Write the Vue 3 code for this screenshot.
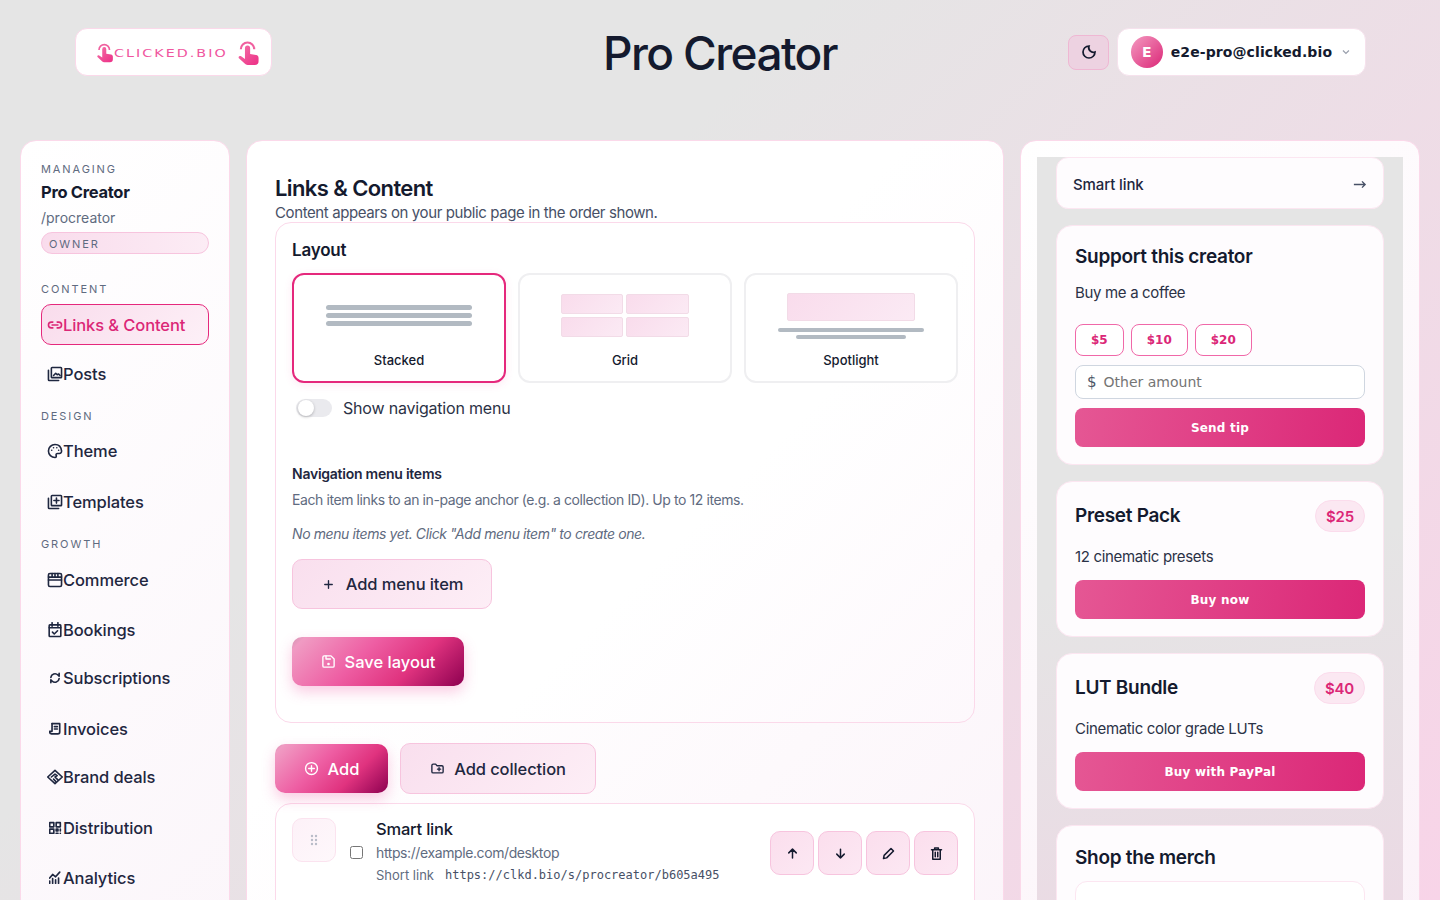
<template>
  <div class="page">
    <header class="topbar">
      <div class="logo-card">
        <svg class="hand small" viewBox="0 0 24 28"><use href="#hand-shape" /></svg>
        <span class="logo-box"><span class="logo-text">clicked.bio</span></span>
        <svg class="hand big" viewBox="0 0 24 28"><use href="#hand-shape" /></svg>
      </div>
      <h1 class="site-title">Pro Creator</h1>
      <div class="top-actions">
        <button class="moon-btn">
          <svg viewBox="0 0 24 24" class="icon"><path d="M12 3a7 7 0 0 0 9 9 9 9 0 1 1-9-9z" /></svg>
        </button>
        <div class="user-chip">
          <span class="avatar">E</span>
          <span class="user-mail">e2e-pro@clicked.bio</span>
          <svg viewBox="0 0 24 24" class="chev"><path d="M6 9l6 6 6-6" /></svg>
        </div>
      </div>
    </header>

    <svg width="0" height="0" class="defs">
      <defs>
        <linearGradient id="hand-fill" x1="0" y1="0" x2="1" y2="1">
          <stop offset="0" stop-color="#f472a8" />
          <stop offset="1" stop-color="#ec2f86" />
        </linearGradient>
        <g id="hand-shape">
          <path d="M4 10.500a7 7 0 1 1 14 0" fill="none" stroke="#f0609f" stroke-width="2.200" />
          <path d="M8.300 9.500a2.700 2.700 0 0 1 5.400 0v6l6.300 1.200c1.500.3 2.500 1.500 2.500 3V23a4 4 0 0 1-4 4h-7.500a4 4 0 0 1-3-1.400L2 20c-1.100-1.400.8-3.100 2.300-2l4 2.700z" fill="url(#hand-fill)" />
        </g>
      </defs>
    </svg>

    <div class="columns">
      <aside class="sidebar">
        <div class="side-label first">Managing</div>
        <div class="profile-name">Pro Creator</div>
        <div class="profile-slug">/procreator</div>
        <div class="owner-pill">OWNER</div>

        <template v-for="group in navGroups" :key="group.label">
          <div class="side-label" :class="'label-' + group.label.toLowerCase()">{{ group.label }}</div>
          <a
            v-for="item in group.items"
            :key="item.name"
            class="nav-item"
            :class="{ active: item.active }"
            :style="{ marginBottom: item.gap + 'px' }"
          >
            <svg viewBox="1 1 22 22" class="nav-icon" :class="{ small: item.small }"><path v-for="d in item.paths" :key="d" :d="d" /></svg>
            <span>{{ item.name }}</span>
          </a>
        </template>
      </aside>

      <main class="main-card">
        <h2 class="main-title">Links &amp; Content</h2>
        <p class="main-sub">Content appears on your public page in the order shown.</p>

        <section class="layout-card">
          <h3 class="layout-title">Layout</h3>
          <div class="tiles">
            <div class="tile selected">
              <div class="tile-art">
                <div class="bars stacked"><i></i><i></i><i></i></div>
              </div>
              <span>Stacked</span>
            </div>
            <div class="tile">
              <div class="tile-art">
                <div class="grid-art"><i></i><i></i><i></i><i></i></div>
              </div>
              <span>Grid</span>
            </div>
            <div class="tile">
              <div class="tile-art spot">
                <div class="spot-box"></div>
                <div class="spot-line"></div>
                <div class="spot-line short"></div>
              </div>
              <span>Spotlight</span>
            </div>
          </div>

          <div class="toggle-row">
            <span class="toggle"><span class="knob"></span></span>
            <span class="toggle-label">Show navigation menu</span>
          </div>

          <div class="menu-head">Navigation menu items</div>
          <p class="menu-desc">Each item links to an in-page anchor (e.g. a collection ID). Up to 12 items.</p>
          <p class="menu-empty">No menu items yet. Click "Add menu item" to create one.</p>

          <button class="soft-btn menu-btn">
            <svg viewBox="0 0 24 24" class="btn-icon"><path d="M12 6v12M6 12h12" /></svg>
            Add menu item
          </button>

          <button class="grad-btn save-btn">
            <svg viewBox="0 0 24 24" class="btn-icon"><path d="M5 3h11l5 5v11a2 2 0 0 1-2 2H5a2 2 0 0 1-2-2V5a2 2 0 0 1 2-2z" /><path d="M8 3v5h7M12 17a1 1 0 1 0 0-2 1 1 0 0 0 0 2z" /></svg>
            Save layout
          </button>
        </section>

        <div class="add-row">
          <button class="grad-btn add-btn">
            <svg viewBox="0 0 24 24" class="btn-icon round"><circle cx="12" cy="12" r="9.500" /><path d="M12 7.500v9M7.500 12h9" /></svg>
            Add
          </button>
          <button class="soft-btn coll-btn">
            <svg viewBox="0 0 24 24" class="btn-icon"><path d="M3 7a2 2 0 0 1 2-2h4l2 2.500h8a2 2 0 0 1 2 2V17a2 2 0 0 1-2 2H5a2 2 0 0 1-2-2z" /><path d="M12 13h5M14.500 10.500v5" /></svg>
            Add collection
          </button>
        </div>

        <div class="link-row">
          <div class="drag-handle">
            <svg viewBox="0 0 12 14" class="drag-dots">
              <circle v-for="d in dots" :key="d.x + '-' + d.y" :cx="d.x" :cy="d.y" r="1.200" />
            </svg>
          </div>
          <input type="checkbox" class="row-check" />
          <div class="row-text">
            <div class="row-title">Smart link</div>
            <div class="row-url">https://example.com/desktop</div>
            <div class="row-short">
              <span>Short link</span>
              <code>https://clkd.bio/s/procreator/b605a495</code>
            </div>
          </div>
          <div class="row-actions">
            <button class="icon-btn"><svg viewBox="0 0 24 24" class="act-icon"><path d="M12 19V5M6 11l6-6 6 6" /></svg></button>
            <button class="icon-btn"><svg viewBox="0 0 24 24" class="act-icon"><path d="M12 5v14M6 13l6 6 6-6" /></svg></button>
            <button class="icon-btn"><svg viewBox="0 0 24 24" class="act-icon"><path d="M4 20l1-5L16 4l4 4L9 19z" /></svg></button>
            <button class="icon-btn"><svg viewBox="0 0 24 24" class="act-icon"><path d="M4 6h16M9 6V3h6v3M6 6v15h12V6M10 10v7M14 10v7" /></svg></button>
          </div>
        </div>
      </main>

      <aside class="preview-card">
        <div class="preview-inner">
          <div class="pv-link">
            <span>Smart link</span>
            <svg viewBox="0 0 24 24" class="pv-arrow"><path d="M3 12h18M16 7l5 5-5 5" /></svg>
          </div>

          <div class="pv-card tip-card">
            <div class="pv-title">Support this creator</div>
            <div class="pv-desc tip-desc">Buy me a coffee</div>
            <div class="tip-pills">
              <button v-for="t in tips" :key="t" class="tip-pill">{{ t }}</button>
            </div>
            <div class="amount-input"><span class="dollar">$</span><span>Other amount</span></div>
            <button class="pv-btn tip-send">Send tip</button>
          </div>

          <div v-for="p in products" :key="p.title" class="pv-card product">
            <div class="product-head">
              <span class="pv-title">{{ p.title }}</span>
              <span class="price">{{ p.price }}</span>
            </div>
            <div class="pv-desc product-desc">{{ p.desc }}</div>
            <button class="pv-btn">{{ p.cta }}</button>
          </div>

          <div class="pv-card merch">
            <div class="pv-title">Shop the merch</div>
            <div class="merch-item"></div>
          </div>
        </div>
      </aside>
    </div>
  </div>
</template>

<script setup>
const icons = {
  link: ['M9 8H7a4 4 0 0 0 0 8h2M15 8h2a4 4 0 0 1 0 8h-2M8 12h8'],
  posts: ['M8 3h12a1 1 0 0 1 1 1v12a1 1 0 0 1-1 1H8a1 1 0 0 1-1-1V4a1 1 0 0 1 1-1z', 'M3 7v13a1 1 0 0 0 1 1h13', 'M10 14l3-3 2 2 2-1 2 2'],
  theme: ['M12 3a9 9 0 1 0 0 18c2 0 2-1.500 1.500-3-.4-1.500.5-2.500 2-2.500H18a3 3 0 0 0 3-3.500C20.500 6.500 17 3 12 3z', 'M7.500 11h.01M10 7.500h.01M14.500 7.500h.01M17 11h.01'],
  templates: ['M8 3h12a1 1 0 0 1 1 1v12a1 1 0 0 1-1 1H8a1 1 0 0 1-1-1V4a1 1 0 0 1 1-1z', 'M3 7v13a1 1 0 0 0 1 1h13', 'M14 6.500v7M10.500 10h7'],
  commerce: ['M5 3h14a2 2 0 0 1 2 2v3H3V5a2 2 0 0 1 2-2z', 'M3 8v11a2 2 0 0 0 2 2h14a2 2 0 0 0 2-2V8', 'M8 3v5M12 3v5M16 3v5', 'M3 12h18'],
  bookings: ['M5 5h14a1 1 0 0 1 1 1v14a1 1 0 0 1-1 1H5a1 1 0 0 1-1-1V6a1 1 0 0 1 1-1z', 'M8 2v5M16 2v5M4 9h16', 'M8.500 15l2.500 2.500 4.500-4.500'],
  subs: ['M5 11a7 7 0 0 1 12-4l2 2V4', 'M19 13a7 7 0 0 1-12 4l-2-2v5'],
  invoices: ['M7 3h13v14a3 3 0 0 1-3 3H6', 'M7 3v13H3v1a3 3 0 0 0 3 3h11', 'M11 8h5M11 12h5'],
  deals: ['M12 3l10 9-10 9L2 12z', 'M7 12l5-4 3 2-3 2 4 4', 'M10 15l3 3'],
  dist: ['M3 3h7v7H3zM14 3h7v7h-7zM3 14h7v7H3z', 'M14 14h3v3h-3zM21 14v3M14 21h3M21 21h.01'],
  analytics: ['M3 21v-4M8 21v-8M13 21v-6M18 21v-9', 'M3 12l5-6 5 4 7-8'],
}

const navGroups = [
  {
    label: 'Content',
    items: [
      { name: 'Links & Content', paths: icons.link, active: true, gap: 8 },
      { name: 'Posts', paths: icons.posts, gap: 0 },
    ],
  },
  {
    label: 'Design',
    items: [
      { name: 'Theme', paths: icons.theme, gap: 10 },
      { name: 'Templates', paths: icons.templates, gap: 0 },
    ],
  },
  {
    label: 'Growth',
    items: [
      { name: 'Commerce', paths: icons.commerce, gap: 9 },
      { name: 'Bookings', paths: icons.bookings, gap: 7 },
      { name: 'Subscriptions', paths: icons.subs, gap: 10, small: true },
      { name: 'Invoices', paths: icons.invoices, gap: 7, small: true },
      { name: 'Brand deals', paths: icons.deals, gap: 10 },
      { name: 'Distribution', paths: icons.dist, gap: 9, small: true },
      { name: 'Analytics', paths: icons.analytics, gap: 0, small: true },
    ],
  },
]

const tips = ['$5', '$10', '$20']

const products = [
  { title: 'Preset Pack', price: '$25', desc: '12 cinematic presets', cta: 'Buy now' },
  { title: 'LUT Bundle', price: '$40', desc: 'Cinematic color grade LUTs', cta: 'Buy with PayPal' },
]

const dots = []
for (const y of [3, 7, 11]) {
  for (const x of [4, 8]) dots.push({ x, y })
}
</script>

<style>
html, body {
  margin: 0;
  height: 900px;
  overflow: hidden;
}
</style>

<style scoped>
.page {
  width: 1440px;
  height: 900px;
  overflow: hidden;
  background: linear-gradient(135deg, #e5e5e5 0%, #e5e5e5 35%, #f8d4e8 100%);
  font-family: Inter, "Noto Sans", sans-serif;
  color: #1a2033;
}
.defs { position: absolute; }

.topbar {
  display: grid;
  grid-template-columns: 1fr auto 1fr;
  align-items: center;
  padding: 28px 74px 0;
  height: 48px;
  margin-bottom: 64px;
}
.logo-card {
  justify-self: start;
  width: 197px;
  height: 48px;
  margin-left: 1px;
  padding-left: 20px;
  box-sizing: border-box;
  display: flex;
  align-items: center;
  background: #fff;
  border: 1px solid #fbd9ea;
  border-radius: 12px;
}
.hand.small { width: 18px; height: 21px; flex: none; }
.hand.big { width: 23px; height: 27px; margin-left: 11px; flex: none; }
.logo-box {
  display: block;
  flex: none;
  width: 112px;
  height: 14px;
  line-height: 14px;
  margin-bottom: 2px;
}
.logo-text {
  display: inline-block;
  font-family: "DejaVu Sans", sans-serif;
  font-size: 10.5px;
  letter-spacing: 1.5px;
  text-transform: uppercase;
  color: #f0559e;
  white-space: nowrap;
  transform: scaleX(1.36);
  transform-origin: left center;
}
.site-title {
  margin: 0;
  padding-top: 2px;
  font-size: 46px;
  font-weight: 500;
  letter-spacing: -1.6px;
  line-height: 46px;
  color: #141a2e;
}
.top-actions {
  justify-self: end;
  display: flex;
  align-items: center;
  gap: 8px;
}
.moon-btn {
  width: 41px;
  height: 35px;
  padding: 0;
  display: flex;
  align-items: center;
  justify-content: center;
  background: #edd2e1;
  border: 1px solid #efb7d3;
  border-radius: 8px;
}
.icon { width: 16px; height: 16px; fill: none; stroke: #141a2e; stroke-width: 2.600; }
.user-chip {
  width: 249px;
  height: 48px;
  box-sizing: border-box;
  display: flex;
  align-items: center;
  padding: 0 13px;
  background: #fff;
  border: 1px solid #f6e2ed;
  border-radius: 12px;
}
.avatar {
  width: 32px;
  height: 32px;
  border-radius: 50%;
  background: linear-gradient(135deg, #f49ac1, #db2777);
  color: #fff;
  font-family: "DejaVu Sans", sans-serif;
  font-weight: 700;
  font-size: 14px;
  display: flex;
  align-items: center;
  justify-content: center;
}
.user-mail {
  margin-left: 8px;
  font-family: "DejaVu Sans", sans-serif;
  font-weight: 700;
  font-size: 14px;
  letter-spacing: 0.1px;
  color: #141a2e;
  white-space: nowrap;
}
.chev {
  width: 12px;
  height: 12px;
  margin-left: 8px;
  fill: none;
  stroke: #9aa0ad;
  stroke-width: 2.500;
}

.columns {
  display: grid;
  grid-template-columns: 210px 758px 400px;
  gap: 16px;
  padding: 0 20px;
  align-items: start;
}

.sidebar {
  box-sizing: border-box;
  height: 900px;
  padding: 21px 20px;
  background: linear-gradient(135deg, #fff 0%, #fbf5fa 100%);
  border: 1px solid #fbd9ea;
  border-radius: 16px;
}
.side-label {
  margin: 15px 0 8px;
  font-size: 11px;
  line-height: 14px;
  letter-spacing: 1.900px;
  text-transform: uppercase;
  color: #5f6b80;
}
.side-label.first { margin: 0; }
.side-label.label-design { margin-bottom: 7px; }
.owner-pill + .side-label { margin-top: 28px; }
.profile-name {
  margin-top: 4px;
  font-size: 16.500px;
  line-height: 24px;
  font-weight: 700;
  letter-spacing: -0.3px;
  color: #141a2e;
}
.profile-slug {
  margin-top: 4px;
  font-size: 14px;
  line-height: 20px;
  color: #5f6b80;
}
.owner-pill {
  margin-top: 4px;
  height: 22px;
  box-sizing: border-box;
  padding-left: 7px;
  font-size: 11px;
  line-height: 22px;
  letter-spacing: 1.900px;
  color: #5f6b80;
  background: linear-gradient(90deg, #f9dcec, #fcecf5);
  border: 1px solid #f7c4de;
  border-radius: 999px;
}
.nav-item {
  display: flex;
  align-items: center;
  gap: 0;
  height: 41px;
  box-sizing: border-box;
  padding-left: 5px;
  border: 1px solid transparent;
  border-radius: 10px;
  font-size: 16.500px;
  font-weight: 500;
  letter-spacing: -0.1px;
  color: #1f2740;
}
.nav-item.active {
  color: #db2777;
  background: linear-gradient(135deg, #f9dcec, #fdf0f7);
  border-color: #e5287c;
}
.nav-icon {
  width: 16px;
  height: 16px;
  flex: none;
  fill: none;
  stroke: currentColor;
  stroke-width: 2.200;
  stroke-linecap: round;
  stroke-linejoin: round;
}
.nav-icon.small {
  box-sizing: border-box;
  padding: 1.500px;
  stroke-width: 2.800;
}

.main-card {
  box-sizing: border-box;
  height: 900px;
  padding: 34px 28px 0;
  background: linear-gradient(135deg, #fff 0%, #fff 40%, #fbf3f9 100%);
  border: 1px solid #fbd9ea;
  border-radius: 16px;
}
.main-title {
  margin: 0;
  font-size: 22px;
  line-height: 26px;
  font-weight: 600;
  letter-spacing: -0.6px;
  color: #141a2e;
}
.main-sub {
  margin: 2px 0 0;
  font-size: 15px;
  line-height: 19px;
  letter-spacing: -0.39px;
  color: #475066;
}
.layout-card {
  box-sizing: border-box;
  height: 501px;
  margin-top: 0;
  padding: 16px;
  background: linear-gradient(135deg, #fff 0%, #fff 60%, #fdf8fc 100%);
  border: 1px solid #fbd9ea;
  border-radius: 16px;
}
.layout-title {
  margin: 0;
  font-size: 17px;
  line-height: 22px;
  font-weight: 600;
  letter-spacing: -0.2px;
  color: #141a2e;
}
.tiles {
  display: grid;
  grid-template-columns: repeat(3, 214px);
  gap: 12px;
  margin-top: 12px;
}
.tile {
  box-sizing: border-box;
  height: 110px;
  display: flex;
  flex-direction: column;
  align-items: center;
  background: #fff;
  border: 2px solid #efeff1;
  border-radius: 12px;
  font-size: 13px;
  font-weight: 500;
  color: #141a2e;
}
.tile.selected {
  border-color: #e5287c;
  box-shadow: 0 2px 8px rgba(236, 72, 153, 0.12);
}
.tile-art {
  box-sizing: border-box;
  height: 67px;
  padding-top: 14px;
  margin-bottom: 10px;
  display: flex;
  flex-direction: column;
  align-items: center;
  justify-content: center;
}
.bars { display: flex; flex-direction: column; gap: 3px; width: 146px; }
.bars i, .spot-line {
  display: block;
  height: 5px;
  border-radius: 3px;
  background: #b2bac2;
}
.grid-art {
  display: grid;
  grid-template-columns: 62px 63px;
  grid-auto-rows: 20px;
  gap: 3px;
}
.grid-art i, .spot-box {
  display: block;
  box-sizing: border-box;
  background: linear-gradient(135deg, #f9dcec, #fbeaf4);
  border: 1px solid #f2dbe7;
  border-radius: 2px;
}
.spot-box { width: 128px; height: 28px; margin-bottom: 4px; }
.spot-line { width: 146px; height: 4px; margin-top: 3px; }
.spot-line.short { width: 110px; }
.toggle-row {
  display: flex;
  align-items: center;
  margin-top: 16px;
  padding-left: 4px;
  height: 18px;
}
.toggle {
  position: relative;
  display: block;
  width: 36px;
  height: 18px;
  background: #eaeaee;
  border-radius: 9px;
}
.knob {
  position: absolute;
  left: 2px;
  top: 1px;
  width: 16px;
  height: 16px;
  background: #fff;
  border-radius: 50%;
  box-shadow: 0 1px 3px rgba(0, 0, 0, 0.25);
}
.toggle-label {
  margin-left: 11px;
  font-size: 16px;
  letter-spacing: -0.2px;
  color: #2b3246;
}
.menu-head {
  margin-top: 48px;
  font-size: 14px;
  line-height: 18px;
  font-weight: 600;
  letter-spacing: -0.25px;
  color: #1f2740;
}
.menu-desc {
  margin: 7px 0 0;
  font-size: 14px;
  line-height: 20px;
  letter-spacing: -0.41px;
  color: #5f6b80;
}
.menu-empty {
  margin: 14px 0 0;
  font-size: 14px;
  line-height: 20px;
  letter-spacing: -0.4px;
  font-style: italic;
  color: #5f6b80;
}
button { font-family: inherit; cursor: pointer; }
.soft-btn {
  display: flex;
  align-items: center;
  justify-content: center;
  box-sizing: border-box;
  gap: 9px;
  background: linear-gradient(135deg, #f9dfee, #fdeef6);
  border: 1px solid #f7c4de;
  border-radius: 10px;
  font-size: 16.500px;
  font-weight: 500;
  letter-spacing: -0.1px;
  color: #1f2740;
}
.menu-btn { width: 200px; height: 50px; margin-top: 15px; gap: 10px; }
.coll-btn { width: 196px; height: 51px; }
.grad-btn {
  display: flex;
  align-items: center;
  justify-content: center;
  box-sizing: border-box;
  gap: 9px;
  border: none;
  border-radius: 10px;
  color: #fff;
  font-size: 16.500px;
  font-weight: 500;
  background: linear-gradient(135deg, #cf94b1 0%, #f09bc3 6%, #ee5ea3 40%, #e0337f 68%, #8d0050 100%);
  box-shadow: 0 6px 14px rgba(236, 72, 153, 0.28);
}
.save-btn { width: 172px; height: 49px; margin-top: 28px; }
.add-btn { width: 113px; height: 49px; }
.btn-icon {
  width: 15px;
  height: 15px;
  fill: none;
  stroke: currentColor;
  stroke-width: 2.200;
  stroke-linecap: round;
  stroke-linejoin: round;
}
.add-row {
  display: flex;
  align-items: center;
  gap: 12px;
  margin-top: 20px;
}
.link-row {
  display: flex;
  box-sizing: border-box;
  height: 130px;
  margin-top: 9px;
  padding: 14px 16px 0;
  background: #fff;
  border: 1px solid #fbd9ea;
  border-radius: 16px;
  align-items: flex-start;
}
.drag-handle {
  width: 44px;
  height: 44px;
  box-sizing: border-box;
  display: flex;
  align-items: center;
  justify-content: center;
  background: linear-gradient(135deg, #fdf1f8, #fef8fb);
  border: 1px solid #fbe3ef;
  border-radius: 10px;
}
.drag-dots { width: 12px; height: 14px; fill: #b9bcc8; }
.row-check {
  width: 13px;
  height: 13px;
  margin: 28px 0 0 14px;
  flex: none;
}
.row-text { margin-left: 13px; width: 394px; }
.row-title {
  font-size: 16.500px;
  line-height: 22px;
  font-weight: 500;
  letter-spacing: -0.2px;
  color: #141a2e;
}
.row-url {
  margin-top: 4px;
  font-size: 14px;
  line-height: 18px;
  letter-spacing: -0.4px;
  color: #5f6b80;
}
.row-short {
  margin-top: 4px;
  display: flex;
  align-items: center;
  gap: 11px;
  font-size: 13px;
  line-height: 18px;
  color: #5f6b80;
}
.row-short code {
  font-family: "DejaVu Sans Mono", monospace;
  font-size: 12px;
  color: #475066;
}
.row-actions {
  display: flex;
  gap: 4px;
  margin-top: 13px;
}
.icon-btn {
  width: 44px;
  height: 44px;
  padding: 0;
  display: flex;
  align-items: center;
  justify-content: center;
  background: linear-gradient(135deg, #fbdeed, #fce8f3);
  border: 1px solid #f7c4de;
  border-radius: 10px;
  color: #141a2e;
}
.act-icon {
  width: 15px;
  height: 15px;
  fill: none;
  stroke: currentColor;
  stroke-width: 2.400;
  stroke-linecap: round;
  stroke-linejoin: round;
}

.preview-card {
  box-sizing: border-box;
  height: 900px;
  padding: 16px;
  background: linear-gradient(135deg, #fff 0%, #fbf1f8 100%);
  border: 1px solid #fbd9ea;
  border-radius: 16px;
}
.preview-inner {
  box-sizing: border-box;
  height: 800px;
  padding: 0 19px;
  background: linear-gradient(170deg, #e5e5e5 0%, #e5e5e5 50%, #ecd8e4 100%);
  display: flex;
  flex-direction: column;
  gap: 16px;
}
.pv-link {
  height: 52px;
  flex: none;
  box-sizing: border-box;
  padding: 2px 16px 0;
  display: flex;
  align-items: center;
  justify-content: space-between;
  background: #fefcfe;
  border: 1px solid #fce6f1;
  border-radius: 12px;
  font-size: 15px;
  font-weight: 500;
  letter-spacing: -0.1px;
  color: #1f2740;
}
.pv-arrow {
  width: 15px;
  height: 15px;
  fill: none;
  stroke: #475066;
  stroke-width: 2.200;
}
.pv-card {
  box-sizing: border-box;
  padding: 18px;
  background: #fefcfe;
  border: 1px solid #fce6f1;
  border-radius: 16px;
  flex: none;
}
.tip-card { height: 240px; padding-top: 18px; }
.product { height: 156px; }
.merch { height: 200px; }
.pv-title {
  display: block;
  font-size: 19px;
  line-height: 26px;
  font-weight: 600;
  letter-spacing: -0.3px;
  color: #141a2e;
}
.pv-desc {
  font-size: 15px;
  line-height: 20px;
  letter-spacing: -0.33px;
  color: #2b3246;
}
.tip-desc { margin-top: 13px; }
.tip-pills { display: flex; gap: 7px; margin-top: 21px; }
.tip-pill {
  height: 32px;
  padding: 0 15px;
  background: #fff;
  border: 1px solid #f068a8;
  border-radius: 8px;
  font-family: "DejaVu Sans", sans-serif;
  font-size: 12px;
  font-weight: 700;
  color: #db2777;
}
.amount-input {
  height: 34px;
  margin-top: 9px;
  box-sizing: border-box;
  display: flex;
  align-items: center;
  gap: 7px;
  padding-left: 11px;
  border: 1px solid #cfd6e0;
  border-radius: 8px;
  background: #fff;
  font-family: "DejaVu Sans", sans-serif;
  font-size: 14px;
  color: #757575;
}
.dollar { color: #4d5768; font-size: 15px; }
.pv-btn {
  display: block;
  width: 100%;
  height: 39px;
  padding: 0;
  border: none;
  border-radius: 8px;
  background: linear-gradient(100deg, #e55794 0%, #db2777 100%);
  color: #fff;
  font-family: "DejaVu Sans", sans-serif;
  font-size: 12px;
  font-weight: 700;
  letter-spacing: 0.2px;
}
.tip-send { margin-top: 9px; }
.product-head {
  display: flex;
  align-items: center;
  justify-content: space-between;
  height: 32px;
}
.price {
  padding: 0 10px;
  height: 32px;
  box-sizing: border-box;
  display: flex;
  align-items: center;
  background: #fbe8f2;
  border: 1px solid #fbdcec;
  border-radius: 16px;
  font-size: 15px;
  font-weight: 600;
  letter-spacing: -0.2px;
  color: #db2777;
}
.product-desc { margin-top: 15px; }
.product .pv-btn { margin-top: 13px; }
.merch .pv-title { margin-top: 1px; }
.merch-item {
  height: 60px;
  margin-top: 10px;
  background: #fff;
  border: 1px solid #fce6f1;
  border-radius: 12px;
}
</style>
